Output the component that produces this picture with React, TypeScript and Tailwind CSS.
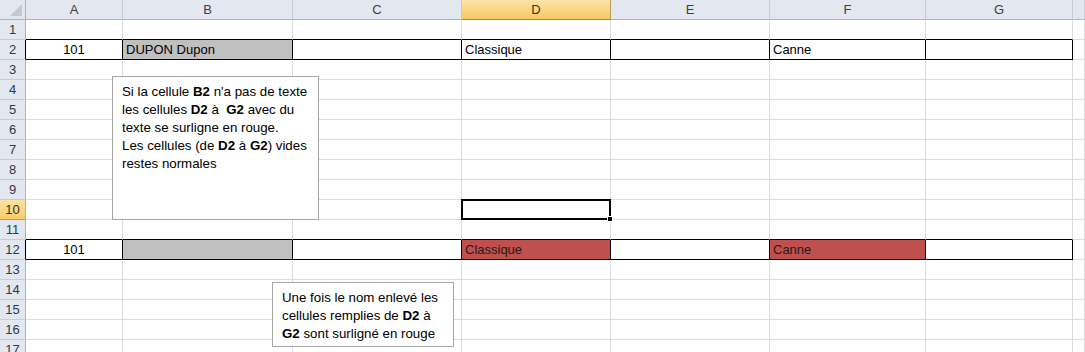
import React from "react";

const COLS = ["A", "B", "C", "D", "E", "F", "G", ""];
const ROW_COUNT = 17;

type Cell = { text?: string; fill?: "gray" | "red"; align?: "center" | "left" };

const DATA: Record<number, Record<number, Cell>> = {
  2: {
    0: { text: "101", align: "center" },
    1: { text: "DUPON Dupon", fill: "gray" },
    3: { text: "Classique" },
    5: { text: "Canne" },
  },
  12: {
    0: { text: "101", align: "center" },
    1: { fill: "gray" },
    3: { text: "Classique", fill: "red" },
    5: { text: "Canne", fill: "red" },
  },
};

const boxRow = (r: number) => r === 2 || r === 12;
const boxCol = (c: number) => c <= 6;

function GridCell({ row, col }: { row: number; col: number }) {
  const cell = DATA[row]?.[col] ?? {};
  const blackBottom = boxCol(col) && (boxRow(row) || boxRow(row + 1));
  const blackRight = boxCol(col) && boxRow(row);
  const selected = row === 10 && col === 3;

  return (
    <div
      className={`relative flex items-center px-[3px] h-[20px] border-r border-b whitespace-nowrap overflow-visible text-[13px] leading-[19px] ${
        blackBottom ? "border-b-black" : "border-b-[#dadcdd]"
      } ${blackRight ? "border-r-black" : "border-r-[#dadcdd]"} ${
        cell.fill === "gray" ? "bg-[#c0c0c0]" : cell.fill === "red" ? "bg-[#c0504d]" : "bg-white"
      } ${cell.align === "center" ? "justify-center" : "justify-start"} ${
        cell.fill === "red" ? "text-[#2a1a1a]" : "text-black"
      }`}
    >
      {cell.text}
      {selected && (
        <div className="absolute z-10 -top-px -left-px -right-px -bottom-px border-2 border-black pointer-events-none">
          <div className="absolute -right-[4px] -bottom-[4px] w-[6px] h-[6px] bg-black border border-white" />
        </div>
      )}
    </div>
  );
}

function Notes({ className, children }: { className: string; children: React.ReactNode }) {
  return (
    <div
      className={`absolute z-20 bg-white border border-[#a6a6a6] pl-[9px] pt-[6px] text-[13.3px] leading-[18px] text-black ${className}`}
    >
      {children}
    </div>
  );
}

export default function App() {
  const rows = Array.from({ length: ROW_COUNT }, (_, i) => i + 1);

  return (
    <div
      className="relative w-[1085px] h-[352px] overflow-hidden bg-white"
      style={{ fontFamily: '"Liberation Sans", Arial, sans-serif' }}
    >
      <div className="grid grid-cols-[26px_97px_170px_169px_149px_159px_156px_147px_1fr]">
        {/* column headers */}
        <div className="h-[20px] border-r border-b border-r-[#a9b4c2] border-b-[#a9b4c2] bg-[#e3e7ef] flex items-end justify-end p-[3px]">
          <svg width="12" height="12" viewBox="0 0 12 12">
            <polygon points="12,0 12,12 0,12" fill="#c3c8d1" />
          </svg>
        </div>
        {COLS.map((c, i) => (
          <div
            key={c + i}
            className={`h-[20px] flex items-center justify-center border-r border-b text-[13px] ${
              i === 3
                ? "bg-gradient-to-b from-[#fbe5a8] to-[#f6c95f] border-r-[#b79c5c] border-b-[#a58a4a] text-[#3a3020]"
                : "bg-[#e3e7ef] border-r-[#c7cdd6] border-b-[#a9b4c2] text-[#3b3f46]"
            }`}
          >
            {c}
          </div>
        ))}

        {rows.map((r) => (
          <React.Fragment key={r}>
            <div
              className={`h-[20px] flex items-center justify-center border-r border-b text-[13px] ${
                r === 10
                  ? "bg-gradient-to-b from-[#fbe3a2] to-[#f6cb65] border-b-[#b79c5c] text-[#3a3020]"
                  : "bg-[#e3e7ef] border-b-[#c7cdd6] text-[#2e3a4c]"
              } ${boxRow(r) ? "border-r-black" : "border-r-[#a9b4c2]"}`}
            >
              {r}
            </div>
            {COLS.map((_, c) => (
              <GridCell key={c} row={r} col={c} />
            ))}
          </React.Fragment>
        ))}
      </div>

      <Notes className="left-[112px] top-[76px] w-[207px] h-[144px]">
        Si la cellule <b>B2</b> n'a pas de texte
        <br />
        les cellules <b>D2</b> à&nbsp; <b>G2</b> avec du
        <br />
        texte se surligne en rouge.
        <br />
        Les cellules (de <b>D2</b> à <b>G2</b>) vides
        <br />
        restes normales
      </Notes>

      <Notes className="left-[272px] top-[282px] w-[182px] h-[65px]">
        Une fois le nom enlevé les
        <br />
        cellules remplies de <b>D2</b> à
        <br />
        <b>G2</b> sont surligné en rouge
      </Notes>
    </div>
  );
}
